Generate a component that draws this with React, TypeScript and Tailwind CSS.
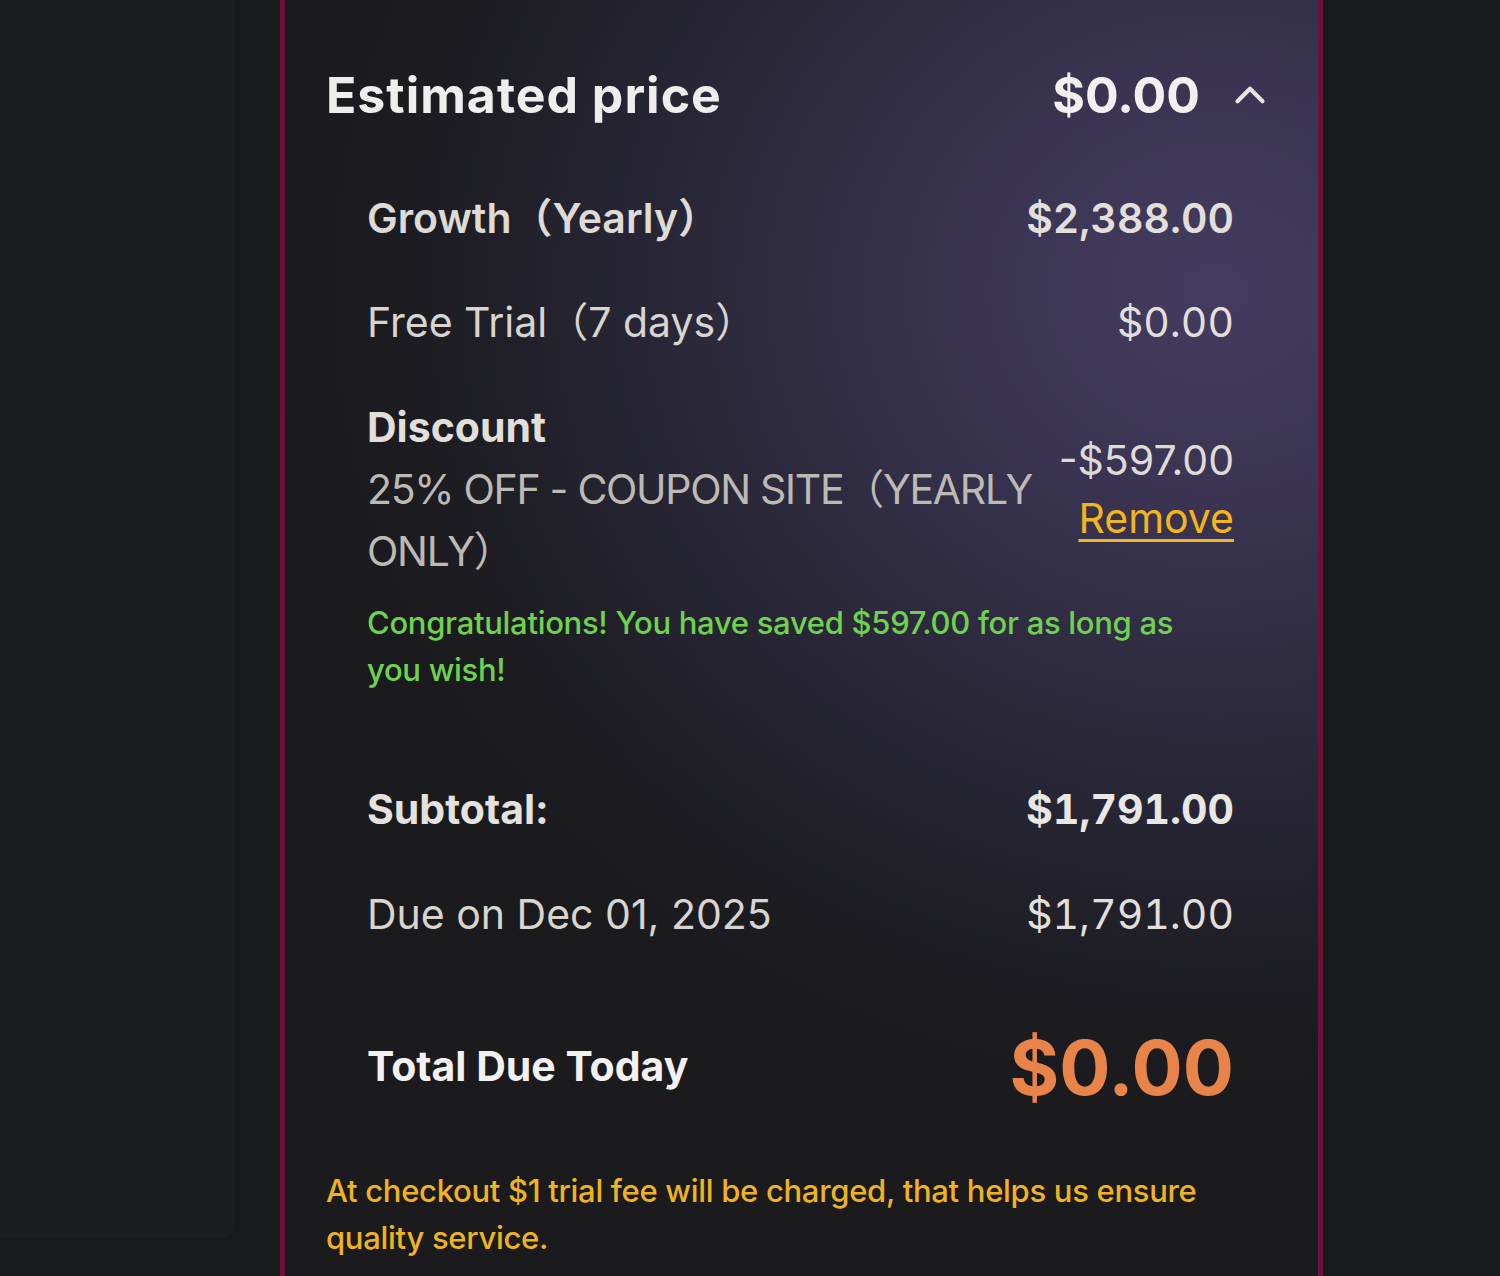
import React from 'react';
import { ChevronUp } from 'lucide-react';

const font = { fontFamily: 'Inter, "Noto Sans CJK SC", sans-serif' };

function Row({ label, value, bold }: { label: string; value: string; bold?: boolean }) {
  return (
    <div className="flex items-center justify-between h-[60px] text-[41px] leading-[60px]">
      <span className={bold ? 'font-bold text-[#e4e1de]' : 'font-normal text-[#d8d4d0]'}>{label}</span>
      <span className={bold ? 'font-bold tabular-nums text-[#e9e7e4]' : 'font-normal tabular-nums text-[#e2dfdb]'}>{value}</span>
    </div>
  );
}

export default function App() {
  return (
    <div className="relative w-[1500px] h-[1276px] overflow-hidden bg-[#18191b] flex" style={font}>
      {/* Left side panel */}
      <div className="w-[235px] h-[1238px] shrink-0 bg-[#1c1d20] rounded-br-[14px]" />

      {/* Price card */}
      <div className="ml-[45px] w-[1043px] h-[1320px] shrink-0 border-x-[5px] border-[#6b1239] bg-[radial-gradient(ellipse_950px_850px_at_90%_22%,#443c5f_0%,#3a3452_25%,#2a2839_55%,#1c1c21_85%,#1b1b1e_100%)] pl-[41px] pr-[43px] pt-[65px]">
        {/* Header */}
        <div className="flex items-center justify-between h-[60px]">
          <h2 className="text-[50px] leading-[60px] font-bold text-[#efeeec] tracking-[1px]">Estimated price</h2>
          <div className="flex items-center gap-[25px]">
            <span className="text-[50px] leading-[60px] font-bold text-[#f1f0ee]">$0.00</span>
            <ChevronUp size={50} strokeWidth={2} className="text-[#e8e6e4]" />
          </div>
        </div>

        {/* Line items */}
        <div className="px-[41px] pt-[63px]">
          <div className="flex items-center justify-between h-[60px] text-[41px] leading-[60px]">
            <span className="font-semibold text-[#dedad6]">Growth（Yearly）</span>
            <span className="font-semibold tabular-nums text-[#e2dfdb]">$2,388.00</span>
          </div>
          <div className="mt-[44px]">
            <Row label="Free Trial（7 days）" value="$0.00" />
          </div>

          <div className="mt-[44px] flex items-center justify-between gap-[6px]">
            <div className="min-w-0 text-[41px] leading-[62px]">
              <div className="font-bold text-[#e2dfdb]">Discount</div>
              <div className="text-[#bdb9b5] tracking-[-1.3px] whitespace-nowrap">
                25% OFF - COUPON SITE（YEARLY
                <br />
                ONLY）
              </div>
            </div>
            <div className="flex flex-col items-end shrink-0 text-[41px] leading-[58px]">
              <span className="text-[#dedbd7]">-$597.00</span>
              <a href="#" className="text-[#f2b51f] underline decoration-[3px] underline-offset-[6px]">Remove</a>
            </div>
          </div>

          <p className="mt-[17px] text-[31px] leading-[47px] font-medium text-[#6fd24f] tracking-[-0.3px]">
            Congratulations! You have saved $597.00 for as long as you wish!
          </p>

          <div className="mt-[86px]">
            <Row label="Subtotal:" value="$1,791.00" bold />
          </div>
          <div className="mt-[45px]">
            <Row label="Due on Dec 01, 2025" value="$1,791.00" />
          </div>

          <div className="mt-[78px] flex items-center justify-between h-[90px]">
            <span className="text-[41px] font-bold text-[#f2f1ef]">Total Due Today</span>
            <span className="text-[76px] leading-[90px] font-bold text-[#e8844a]">$0.00</span>
          </div>
        </div>

        {/* Footer note */}
        <p className="mt-[55px] text-[31px] leading-[47px] font-medium text-[#efb322] tracking-[-0.3px]">
          At checkout $1 trial fee will be charged, that helps us ensure quality service.
        </p>
      </div>
    </div>
  );
}
